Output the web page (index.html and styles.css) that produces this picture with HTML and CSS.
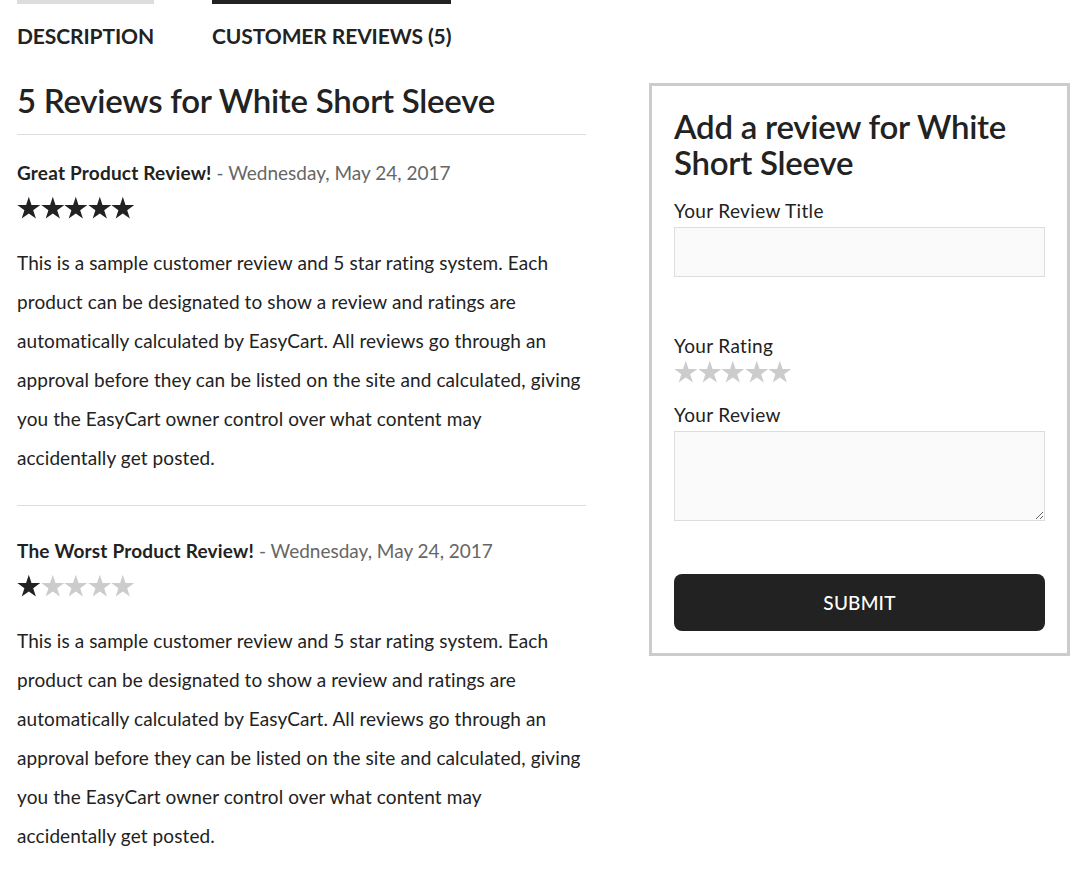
FILE: index.html
```html
<!DOCTYPE html>
<html lang="en">
<head>
<meta charset="utf-8">
<title>Customer Reviews</title>
<link rel="stylesheet" href="styles.css">
</head>
<body>
<svg width="0" height="0" class="defs" aria-hidden="true">
  <defs>
    <symbol id="star" viewBox="0 0 24 24">
      <polygon points="12,0.5 14.76,9 23.7,9 16.47,14.25 19.23,22.75 12,17.5 4.77,22.75 7.53,14.25 0.3,9 9.24,9"/>
    </symbol>
  </defs>
</svg>
<div class="page">
  <nav class="tabs">
    <div class="tab">Description</div>
    <div class="tab active">Customer Reviews (5)</div>
  </nav>

  <div class="main">
    <section class="reviews">
      <h2 class="reviews-title">5 Reviews for White Short Sleeve</h2>

      <article class="review first">
        <div class="review-head"><strong>Great Product Review!</strong> <span class="date">- Wednesday, May 24, 2017</span></div>
        <div class="stars">
          <svg class="star on"><use href="#star"/></svg><svg class="star on"><use href="#star"/></svg><svg class="star on"><use href="#star"/></svg><svg class="star on"><use href="#star"/></svg><svg class="star on"><use href="#star"/></svg>
        </div>
        <p class="review-text">This is a sample customer review and 5 star rating system. Each product can be designated to show a review and ratings are automatically calculated by EasyCart. All reviews go through an approval before they can be listed on the site and calculated, giving you the EasyCart owner control over what content may accidentally get posted.</p>
      </article>

      <article class="review">
        <div class="review-head"><strong>The Worst Product Review!</strong> <span class="date">- Wednesday, May 24, 2017</span></div>
        <div class="stars">
          <svg class="star on"><use href="#star"/></svg><svg class="star"><use href="#star"/></svg><svg class="star"><use href="#star"/></svg><svg class="star"><use href="#star"/></svg><svg class="star"><use href="#star"/></svg>
        </div>
        <p class="review-text">This is a sample customer review and 5 star rating system. Each product can be designated to show a review and ratings are automatically calculated by EasyCart. All reviews go through an approval before they can be listed on the site and calculated, giving you the EasyCart owner control over what content may accidentally get posted.</p>
      </article>
    </section>

    <aside class="add-review">
      <h3 class="add-title">Add a review for White Short Sleeve</h3>
      <label class="field-label" for="rtitle">Your Review Title</label>
      <input class="field-input" id="rtitle" type="text">
      <div class="field-label rating-label">Your Rating</div>
      <div class="stars rating">
        <svg class="star"><use href="#star"/></svg><svg class="star"><use href="#star"/></svg><svg class="star"><use href="#star"/></svg><svg class="star"><use href="#star"/></svg><svg class="star"><use href="#star"/></svg>
      </div>
      <label class="field-label review-label" for="rbody">Your Review</label>
      <textarea class="field-textarea" id="rbody"></textarea>
      <button class="submit" type="button">Submit</button>
    </aside>
  </div>
</div>
</body>
</html>
```

FILE: styles.css
```css
* { box-sizing: border-box; }

html, body {
  margin: 0;
  padding: 0;
  background: #ffffff;
}

body {
  font-family: Lato, "Open Sans", sans-serif;
  color: #222222;
  font-size: 19px;
}

.defs {
  position: absolute;
  width: 0;
  height: 0;
  overflow: hidden;
}

.page {
  padding-left: 17px;
  width: 1091px;
}

.tabs {
  display: flex;
  gap: 58px;
}

.tab {
  border-top: 4px solid #dddddd;
  padding-top: 19px;
  font-size: 21px;
  line-height: 26px;
  font-weight: 700;
  text-transform: uppercase;
  color: #222222;
  letter-spacing: -0.1px;
}

.tab.active {
  border-top-color: #222222;
}

.main {
  display: flex;
  align-items: flex-start;
  gap: 63px;
  margin-top: 31px;
}

.reviews {
  width: 569px;
  flex: none;
}

.reviews-title {
  margin: 0;
  font-size: 33px;
  line-height: 40px;
  font-weight: 600;
  padding-bottom: 14px;
  border-bottom: 1px solid #dddddd;
  letter-spacing: -0.25px;
}

.review {
  padding-top: 31px;
  padding-bottom: 28px;
  border-bottom: 1px solid #dddddd;
}

.review.first {
  padding-top: 24px;
}

.review:last-child {
  border-bottom: none;
}

.review-head {
  font-size: 19px;
  line-height: 27px;
}

.review-head strong {
  font-weight: 700;
  letter-spacing: 0.2px;
}

.date {
  color: #666666;
}

.stars {
  display: flex;
  height: 24px;
  margin-top: 10px;
}

.star {
  width: 23.6px;
  height: 24px;
  fill: #cccccc;
  flex: none;
}

.star.on {
  fill: #222222;
}

.review-text {
  margin: 23px 3px 0 0;
  font-size: 19px;
  line-height: 39px;
  letter-spacing: 0.1px;
}

.add-review {
  width: 421px;
  flex: none;
  margin-top: 3px;
  border: 3px solid #cccccc;
  padding: 22px 22px 22px;
  display: flex;
  flex-direction: column;
}

.add-title {
  margin: 0 0 17px;
  font-size: 33px;
  line-height: 36px;
  font-weight: 600;
  letter-spacing: -0.25px;
}

.field-label {
  display: block;
  font-size: 19px;
  line-height: 27px;
  letter-spacing: 0.35px;
}

.field-input {
  margin-top: 3px;
  height: 50px;
  width: 100%;
  border: 1px solid #dddddd;
  background: #fafafa;
  font: inherit;
}

.rating-label {
  margin-top: 55px;
}

.stars.rating {
  margin-top: 1px;
}

.review-label {
  margin-top: 17px;
}

.field-textarea {
  margin-top: 3px;
  height: 90px;
  width: 100%;
  border: 1px solid #dddddd;
  background: #fafafa;
  font: inherit;
  resize: vertical;
  display: block;
}

.submit {
  margin-top: 53px;
  height: 57px;
  width: 100%;
  border: none;
  border-radius: 8px;
  background: #222222;
  color: #ffffff;
  font-family: Lato, "Open Sans", sans-serif;
  font-size: 19px;
  font-weight: 500;
  letter-spacing: 0.2px;
  text-transform: uppercase;
  cursor: pointer;
}
```
